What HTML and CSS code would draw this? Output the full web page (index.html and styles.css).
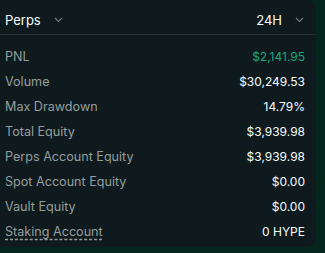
FILE: index.html
```html
<!DOCTYPE html>
<html>
<head>
<meta charset="utf-8">
<link rel="stylesheet" href="styles.css">
</head>
<body>
<div class="panel">
  <div class="header">
    <div class="select">
      <span>Perps</span>
      <svg class="chev" width="9" height="6" viewBox="0 0 9 6"><path d="M1 1 L4.5 4.5 L8 1" fill="none" stroke="#6f7a7e" stroke-width="1.2"/></svg>
    </div>
    <div class="select">
      <span>24H</span>
      <svg class="chev" width="9" height="6" viewBox="0 0 9 6"><path d="M1 1 L4.5 4.5 L8 1" fill="none" stroke="#6f7a7e" stroke-width="1.2"/></svg>
    </div>
  </div>
  <div class="rows">
    <div class="row"><span class="label">PNL</span><span class="value green">$2,141.95</span></div>
    <div class="row"><span class="label">Volume</span><span class="value">$30,249.53</span></div>
    <div class="row"><span class="label">Max Drawdown</span><span class="value">14.79%</span></div>
    <div class="row"><span class="label">Total Equity</span><span class="value">$3,939.98</span></div>
    <div class="row"><span class="label">Perps Account Equity</span><span class="value">$3,939.98</span></div>
    <div class="row"><span class="label">Spot Account Equity</span><span class="value">$0.00</span></div>
    <div class="row"><span class="label">Vault Equity</span><span class="value">$0.00</span></div>
    <div class="row"><span class="label dashed">Staking Account</span><span class="value">0 HYPE</span></div>
  </div>
</div>
</body>
</html>
```
FILE: styles.css
```css
html, body {
  margin: 0;
  padding: 0;
  background: #04261d;
  font-family: Inter, "Noto Sans", sans-serif;
}
.panel {
  width: 316px;
  height: 247px;
  background: #0f1a1f;
  border-radius: 0 8px 8px 0;
  box-sizing: border-box;
}
.header {
  height: 35px;
  box-sizing: border-box;
  padding: 6px 12px 0 5px;
  display: flex;
  align-items: center;
  justify-content: space-between;
  border-bottom: 1px solid #273035;
  color: #f6fefd;
  font-size: 13px;
}
.select {
  display: flex;
  align-items: center;
  gap: 13px;
}
.chev { display: block; }
.rows {
  padding: 9px 11px 0 5px;
}
.row {
  height: 25px;
  display: flex;
  align-items: center;
  justify-content: space-between;
  font-size: 12px;
}
.label { color: #949e9c; font-size: 12.6px; }
.dashed {
  text-decoration: underline dashed #949e9c;
  text-underline-offset: 3px;
}
.value { color: #f6fefd; }
.green { color: #1fa67d; }
```
